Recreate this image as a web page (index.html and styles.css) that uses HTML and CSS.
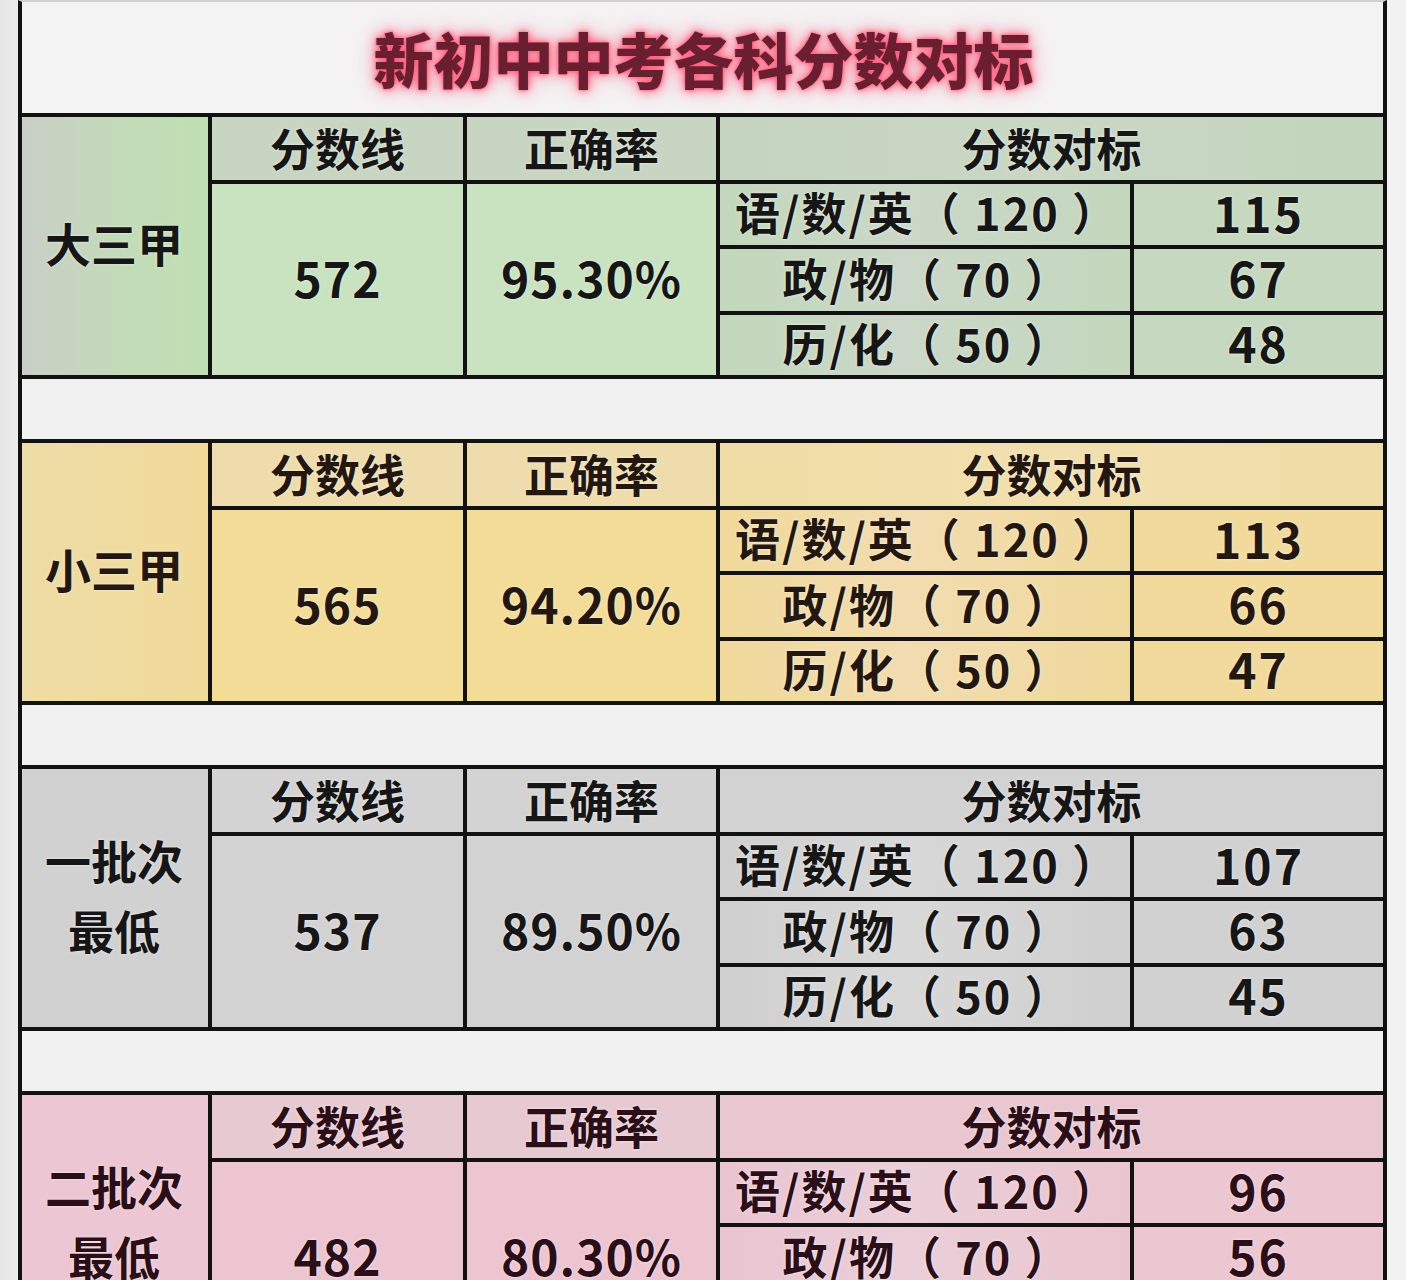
FILE: index.html
```html
<!DOCTYPE html>
<html lang="zh-CN">
<head>
<meta charset="utf-8">
<title>新初中中考各科分数对标</title>
<link rel="stylesheet" href="styles.css">
</head>
<body>
<div class="sheet">
  <div class="title"><h1>新初中中考各科分数对标</h1></div>

  <div class="section green">
    <div class="cell lb"><span>大三甲</span></div>
    <div class="cell hd c2">分数线</div>
    <div class="cell hd c3">正确率</div>
    <div class="cell hd c45">分数对标</div>
    <div class="cell dt c2 rs">572</div>
    <div class="cell dt c3 rs">95.30%</div>
    <div class="cell sb">语/数/英（ 120 ）</div>
    <div class="cell vl">115</div>
    <div class="cell sb">政/物（ 70 ）</div>
    <div class="cell vl">67</div>
    <div class="cell sb">历/化（ 50 ）</div>
    <div class="cell vl">48</div>
  </div>
  <div class="gap"></div>

  <div class="section yellow">
    <div class="cell lb"><span>小三甲</span></div>
    <div class="cell hd c2">分数线</div>
    <div class="cell hd c3">正确率</div>
    <div class="cell hd c45">分数对标</div>
    <div class="cell dt c2 rs">565</div>
    <div class="cell dt c3 rs">94.20%</div>
    <div class="cell sb">语/数/英（ 120 ）</div>
    <div class="cell vl">113</div>
    <div class="cell sb">政/物（ 70 ）</div>
    <div class="cell vl">66</div>
    <div class="cell sb">历/化（ 50 ）</div>
    <div class="cell vl">47</div>
  </div>
  <div class="gap"></div>

  <div class="section grey">
    <div class="cell lb"><span>一批次</span><span>最低</span></div>
    <div class="cell hd c2">分数线</div>
    <div class="cell hd c3">正确率</div>
    <div class="cell hd c45">分数对标</div>
    <div class="cell dt c2 rs">537</div>
    <div class="cell dt c3 rs">89.50%</div>
    <div class="cell sb">语/数/英（ 120 ）</div>
    <div class="cell vl">107</div>
    <div class="cell sb">政/物（ 70 ）</div>
    <div class="cell vl">63</div>
    <div class="cell sb">历/化（ 50 ）</div>
    <div class="cell vl">45</div>
  </div>
  <div class="gap"></div>

  <div class="section pink">
    <div class="cell lb"><span>二批次</span><span>最低</span></div>
    <div class="cell hd c2">分数线</div>
    <div class="cell hd c3">正确率</div>
    <div class="cell hd c45">分数对标</div>
    <div class="cell dt c2 rs">482</div>
    <div class="cell dt c3 rs">80.30%</div>
    <div class="cell sb">语/数/英（ 120 ）</div>
    <div class="cell vl">96</div>
    <div class="cell sb">政/物（ 70 ）</div>
    <div class="cell vl">56</div>
    <div class="cell sb">历/化（ 50 ）</div>
    <div class="cell vl"></div>
  </div>
</div>
</body>
</html>
```
FILE: styles.css
```css
html, body {
  margin: 0;
  padding: 0;
}
body {
  background: linear-gradient(to right, #e6e6e6 0, #ececec 18px, #f2f2f2 18px);
  font-family: "Noto Sans CJK SC", "Noto Sans", sans-serif;
  height: 1280px;
  overflow: hidden;
}
.sheet {
  margin-left: 18px;
  width: 1361px;
  border-left: 4px solid #111;
  border-right: 4px solid #111;
  border-top: 2px solid #cfcfcf;
}
.title {
  height: 111px;
  background: #f4f3f4;
  display: flex;
  align-items: center;
  justify-content: center;
}
.title h1 {
  margin: 0 0 0 2px;
  font-size: 60px;
  font-weight: 900;
  line-height: 1;
  color: #6a1f30;
  letter-spacing: 0;
  text-shadow: 0 0 3px #ff5a78, 0 0 8px rgba(255, 70, 105, 0.85), 0 0 16px rgba(255, 110, 140, 0.7), 0 0 26px rgba(255, 150, 175, 0.5);
}
.gap {
  height: 60px;
  background: #f1f1f2;
}
.section {
  display: grid;
  grid-template-columns: 186px 251px 249px 410px 249px;
  grid-template-rows: 63px 61px 62px 60px;
  gap: 4px;
  background: #121212;
  border-top: 4px solid #121212;
  border-bottom: 4px solid #121212;
}
.cell {
  display: flex;
  align-items: center;
  justify-content: center;
  font-weight: 700;
  color: #161616;
  white-space: pre;
  text-shadow: 0 0 3px rgba(255, 255, 255, 0.7);
}
.lb {
  grid-row: 1 / 5;
  grid-column: 1;
  flex-direction: column;
  font-size: 46px;
  line-height: 70px;
  padding-right: 2px;
  padding-bottom: 8px;
}
.hd {
  font-size: 45px;
  padding-bottom: 2px;
}
.c2 { grid-column: 2; }
.c3 { grid-column: 3; }
.c45 { grid-column: 4 / 6; }
.rs { grid-row: 2 / 5; }
.dt {
  font-size: 48px;
  letter-spacing: 1px;
  padding-bottom: 6px;
}
.sb {
  grid-column: 4;
  font-size: 45px;
  letter-spacing: 2px;
  padding-bottom: 6px;
  padding-left: 4px;
}
.vl {
  grid-column: 5;
  font-size: 48px;
  letter-spacing: 2px;
  padding-bottom: 6px;
}

/* green */
.green .lb { background: linear-gradient(to right, #c9cec6, #c2dcb7 60%, #c0dfb4); }
.green .hd { background: #c8d5c2; }
.green .c45 { background: linear-gradient(to right, #c5d4bf, #c9d7c4 50%, #c3d5bc); }
.green .dt { background: #c9e2bf; }
.green .sb { background: linear-gradient(to right, #c2d8bb, #cbd7c8 45%, #c3d8bd); }
.green .vl { background: #c6d9c0; }

/* yellow */
.yellow .lb { background: linear-gradient(to right, #eedca6, #f1db9a); }
.yellow .hd { background: #eedcac; }
.yellow .c45 { background: linear-gradient(to right, #f0dca4, #f1dfae 50%, #efdca6); }
.yellow .dt { background: #f2dc98; }
.yellow .sb { background: linear-gradient(to right, #f0d99a, #f2dcb0 45%, #f0d99c); }
.yellow .vl { background: #f1da9c; }
.yellow .cell { color: #231710; }

/* grey */
.grey .lb { background: #d1d1d1; }
.grey .hd { background: #d3d3d3; }
.grey .c45 { background: #d2d2d2; }
.grey .dt { background: #d2d2d2; }
.grey .sb { background: linear-gradient(to right, #cfcfcf, #d8d8d8 45%, #cfcfcf); }
.grey .vl { background: #d1d1d1; }

/* pink */
.pink .lb { background: #ecc6d2; }
.pink .hd { background: #e7c9d1; }
.pink .c45 { background: #e9c7d1; }
.pink .dt { background: #ecc5d1; }
.pink .sb { background: linear-gradient(to right, #eac4d0, #eacfd8 45%, #eac5d0); }
.pink .vl { background: #ecc6d1; }
.pink .cell { color: #2a0e18; }
```
